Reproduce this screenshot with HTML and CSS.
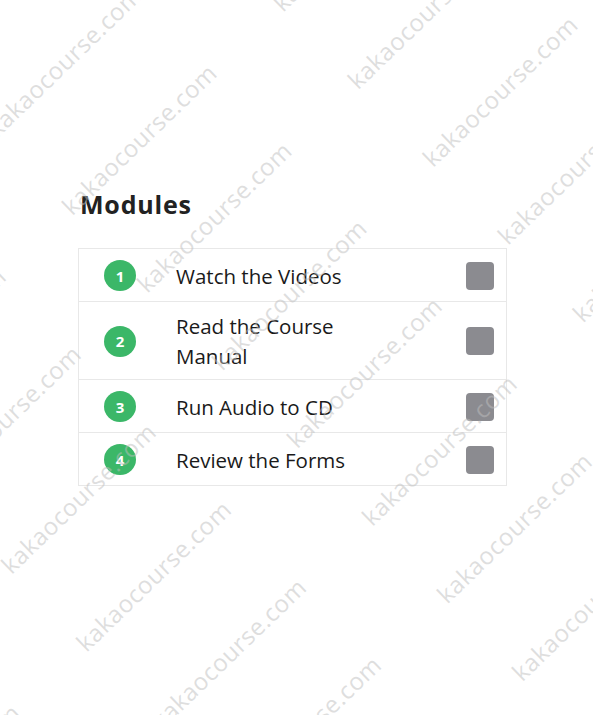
FILE: index.html
```html
<!DOCTYPE html>
<html lang="en">
<head>
    <meta charset="UTF-8">
    <meta name="viewport" content="width=device-width, initial-scale=1.0">
    <title>Modules</title>
    <link rel="stylesheet" href="styles.css">
</head>
<body>
    <main class="page">
        <h2 class="title">Modules</h2>
        <ul class="modules">
            <li class="module">
                <span class="num">1</span>
                <span class="name">Watch the Videos</span>
                <span class="check"></span>
            </li>
            <li class="module">
                <span class="num">2</span>
                <span class="name">Read the Course Manual</span>
                <span class="check"></span>
            </li>
            <li class="module">
                <span class="num">3</span>
                <span class="name">Run Audio to CD</span>
                <span class="check"></span>
            </li>
            <li class="module">
                <span class="num">4</span>
                <span class="name">Review the Forms</span>
                <span class="check"></span>
            </li>
        </ul>
    </main>

    <div class="watermark" aria-hidden="true">
        <div class="wm-grid">
            <div class="wm-row"><span>kakaocourse.com</span><span>kakaocourse.com</span><span>kakaocourse.com</span><span>kakaocourse.com</span><span>kakaocourse.com</span></div>
            <div class="wm-row"><span>kakaocourse.com</span><span>kakaocourse.com</span><span>kakaocourse.com</span><span>kakaocourse.com</span><span>kakaocourse.com</span></div>
            <div class="wm-row"><span>kakaocourse.com</span><span>kakaocourse.com</span><span>kakaocourse.com</span><span>kakaocourse.com</span><span>kakaocourse.com</span></div>
            <div class="wm-row"><span>kakaocourse.com</span><span>kakaocourse.com</span><span>kakaocourse.com</span><span>kakaocourse.com</span><span>kakaocourse.com</span></div>
            <div class="wm-row"><span>kakaocourse.com</span><span>kakaocourse.com</span><span>kakaocourse.com</span><span>kakaocourse.com</span><span>kakaocourse.com</span></div>
            <div class="wm-row"><span>kakaocourse.com</span><span>kakaocourse.com</span><span>kakaocourse.com</span><span>kakaocourse.com</span><span>kakaocourse.com</span></div>
            <div class="wm-row"><span>kakaocourse.com</span><span>kakaocourse.com</span><span>kakaocourse.com</span><span>kakaocourse.com</span><span>kakaocourse.com</span></div>
            <div class="wm-row"><span>kakaocourse.com</span><span>kakaocourse.com</span><span>kakaocourse.com</span><span>kakaocourse.com</span><span>kakaocourse.com</span></div>
            <div class="wm-row"><span>kakaocourse.com</span><span>kakaocourse.com</span><span>kakaocourse.com</span><span>kakaocourse.com</span><span>kakaocourse.com</span></div>
            <div class="wm-row"><span>kakaocourse.com</span><span>kakaocourse.com</span><span>kakaocourse.com</span><span>kakaocourse.com</span><span>kakaocourse.com</span></div>
        </div>
    </div>
</body>
</html>
```

FILE: styles.css
```css
body {
    margin: 0;
    background: #fff;
    font-family: "Open Sans", Arial, sans-serif;
    color: #1a1a1a;
    height: 715px;
    overflow: hidden;
    position: relative;
}

.page {
    padding: 189px 0 0 78px;
    width: 429px;
}

.title {
    margin: 0 0 29px 2px;
    font-size: 25px;
    line-height: 30px;
    font-weight: 700;
    letter-spacing: 0.8px;
    color: #222;
}

.modules {
    list-style: none;
    margin: 0;
    padding: 0;
    border: 1px solid #e8e8e8;
}

.module {
    display: flex;
    align-items: center;
    min-height: 35px;
    padding: 9px 12px 8px 25px;
    border-top: 1px solid #e8e8e8;
}

.module:first-child {
    border-top: none;
}

.num {
    width: 32px;
    height: 31px;
    border-radius: 50%;
    background: #3bb768;
    color: white;
    font-size: 15px;
    font-weight: 700;
    display: flex;
    align-items: center;
    justify-content: center;
    flex-shrink: 0;
}

.name {
    margin-left: 40px;
    width: 200px;
    font-size: 20.5px;
    line-height: 30px;
}

.check {
    margin-left: auto;
    width: 28px;
    height: 28px;
    border-radius: 4px;
    background: #8b8b90;
    flex-shrink: 0;
}

/* watermark layer */
.watermark {
    position: absolute;
    inset: 0;
    overflow: hidden;
    pointer-events: none;
}

.wm-grid {
    position: absolute;
    left: -514px;
    top: 453px;
    transform-origin: 0 0;
    transform: rotate(-44deg);
}

.wm-row {
    display: flex;
    height: 108px;
    line-height: 24px;
    white-space: nowrap;
}

.wm-row span {
    width: 293px;
    flex-shrink: 0;
    font-size: 24px;
    letter-spacing: 0.5px;
    color: rgba(190, 190, 190, 0.5);
}
```
